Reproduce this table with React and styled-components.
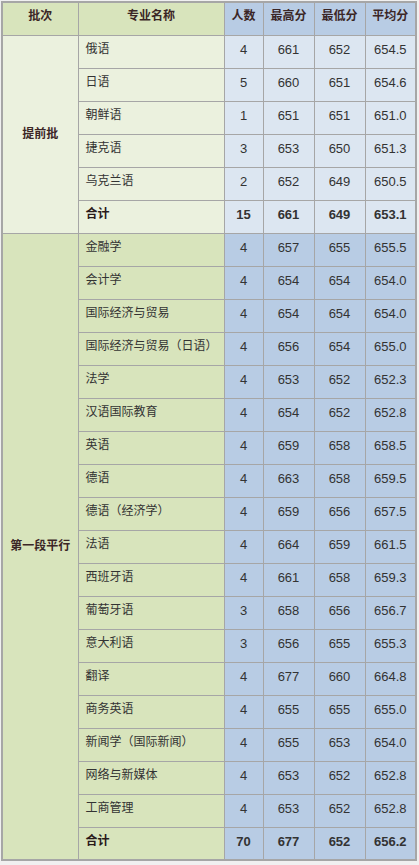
import React from "react";
import styled, { createGlobalStyle } from "styled-components";

const first = [
  ["俄语", 4, 661, 652, "654.5"],
  ["日语", 5, 660, 651, "654.6"],
  ["朝鲜语", 1, 651, 651, "651.0"],
  ["捷克语", 3, 653, 650, "651.3"],
  ["乌克兰语", 2, 652, 649, "650.5"],
];

const second = [
  ["金融学", 4, 657, 655, "655.5"],
  ["会计学", 4, 654, 654, "654.0"],
  ["国际经济与贸易", 4, 654, 654, "654.0"],
  ["国际经济与贸易（日语）", 4, 656, 654, "655.0"],
  ["法学", 4, 653, 652, "652.3"],
  ["汉语国际教育", 4, 654, 652, "652.8"],
  ["英语", 4, 659, 658, "658.5"],
  ["德语", 4, 663, 658, "659.5"],
  ["德语（经济学）", 4, 659, 656, "657.5"],
  ["法语", 4, 664, 659, "661.5"],
  ["西班牙语", 4, 661, 658, "659.3"],
  ["葡萄牙语", 3, 658, 656, "656.7"],
  ["意大利语", 3, 656, 655, "655.3"],
  ["翻译", 4, 677, 660, "664.8"],
  ["商务英语", 4, 655, 655, "655.0"],
  ["新闻学（国际新闻）", 4, 655, 653, "654.0"],
  ["网络与新媒体", 4, 653, 652, "652.8"],
  ["工商管理", 4, 653, 652, "652.8"],
];

const groups = [
  { name: "提前批", light: true, rows: first, total: [15, 661, 649, "653.1"] },
  { name: "第一段平行", light: false, rows: second, total: [70, 677, 652, "656.2"] },
];

const widths = [76, 146, 39, 51, 51, 51];

const GlobalStyle = createGlobalStyle`
  html, body {
    margin: 0;
    padding: 0;
    background: #f0f0f0;
  }
  body {
    font-family: "Liberation Sans", Arial, "Noto Sans CJK SC", sans-serif;
    font-size: 13px;
    line-height: 17px;
    color: #333;
  }
`;

const Page = styled.div`
  padding: 1px;
`;

const Table = styled.table`
  border-collapse: collapse;
  border: 2px solid #a6a6a6;
  table-layout: fixed;
  width: 414px;
`;

const Col = styled.col`
  width: ${(p) => p.$w}px;
`;

const Tr = styled.tr`
  height: 33px;
`;

const Head = styled.th`
  padding: 5px 0 0;
  vertical-align: top;
  text-align: center;
  font-size: 12px;
  font-weight: bold;
  color: #3b2626;
  border: 1px solid #a6a6a6;
  background: ${(p) => (p.$blue ? "#b8cce4" : "#d8e4bc")};
`;

const Group = styled.td`
  vertical-align: middle;
  text-align: center;
  font-size: 12px;
  font-weight: bold;
  color: #3b2626;
  border: 1px solid #a6a6a6;
  background: ${(p) => (p.$light ? "#ebf1de" : "#d8e4bc")};
`;

const Name = styled.td`
  padding: 5px 0 0 7px;
  vertical-align: top;
  text-align: left;
  white-space: nowrap;
  font-size: 12px;
  border: 1px solid #a6a6a6;
  font-weight: ${(p) => (p.$bold ? "bold" : "normal")};
  color: ${(p) => (p.$bold ? "#2a1a1a" : "#333")};
  background: ${(p) => (p.$light ? "#ebf1de" : "#d8e4bc")};
`;

const Num = styled.td`
  padding: 5px 0 0;
  vertical-align: top;
  text-align: center;
  border: 1px solid #a6a6a6;
  font-weight: ${(p) => (p.$bold ? "bold" : "normal")};
  background: ${(p) => (p.$light ? "#dce6f1" : "#b8cce4")};
`;

function Row({ group, r, first, light, bold }) {
  return (
    <Tr>
      {first && (
        <Group $light={light} rowSpan={group.rows.length + 1}>
          {group.name}
        </Group>
      )}
      <Name $light={light} $bold={bold}>{r[0]}</Name>
      {r.slice(1).map((v, i) => (
        <Num key={i} $light={light} $bold={bold}>{v}</Num>
      ))}
    </Tr>
  );
}

export default function App() {
  return (
    <Page>
      <GlobalStyle />
      <Table>
        <colgroup>
          {widths.map((w, i) => (
            <Col key={i} $w={w} />
          ))}
        </colgroup>
        <thead>
          <Tr>
            <Head>批次</Head>
            <Head>专业名称</Head>
            <Head $blue>人数</Head>
            <Head $blue>最高分</Head>
            <Head $blue>最低分</Head>
            <Head $blue>平均分</Head>
          </Tr>
        </thead>
        <tbody>
          {groups.map((g) => (
            <React.Fragment key={g.name}>
              {g.rows.map((r, i) => (
                <Row key={r[0]} group={g} r={r} first={i === 0} light={g.light} />
              ))}
              <Row group={g} r={["合计", ...g.total]} light={g.light} bold />
            </React.Fragment>
          ))}
        </tbody>
      </Table>
    </Page>
  );
}
